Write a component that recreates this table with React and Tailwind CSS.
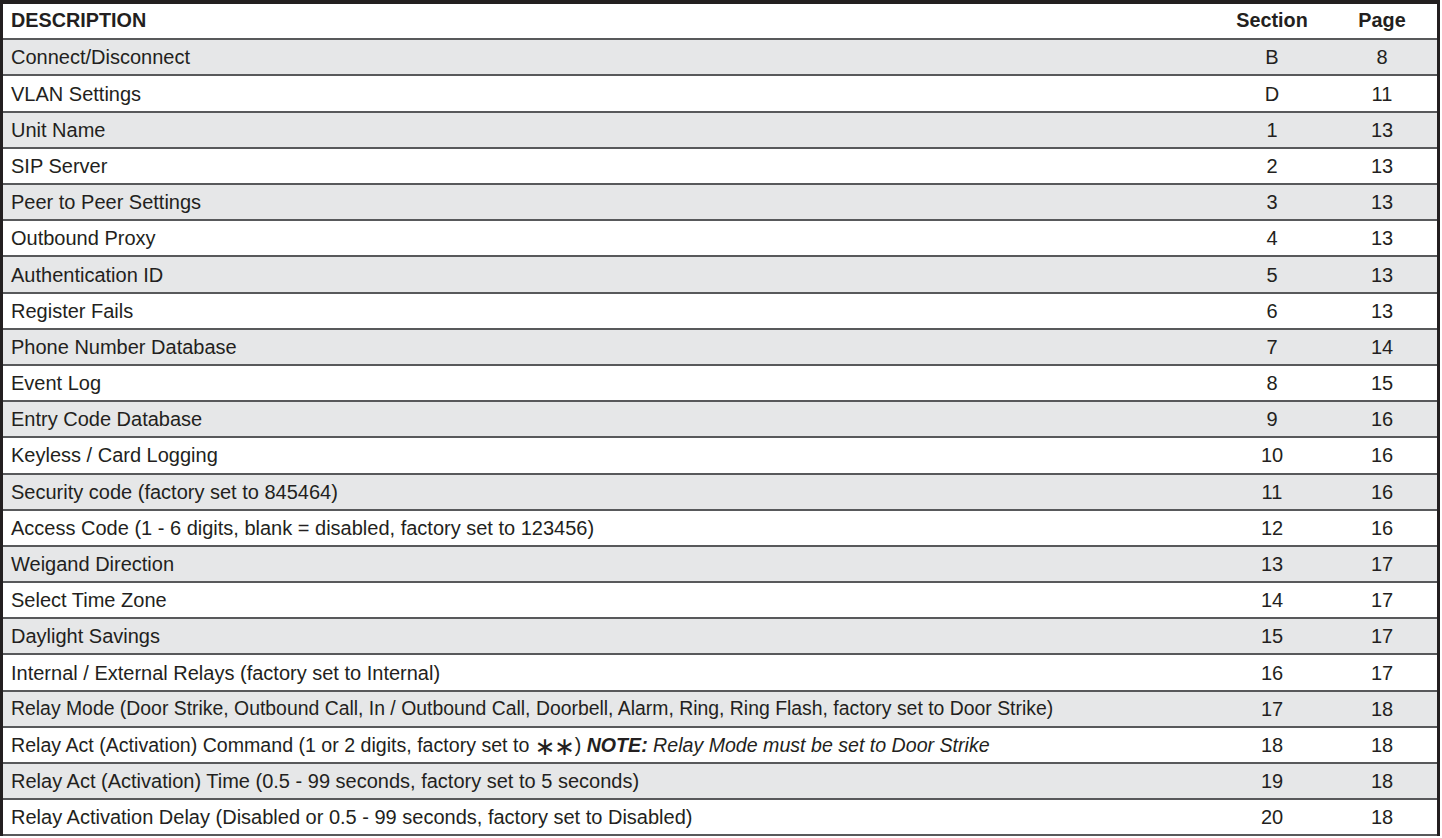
import React from "react";

const rows = [
  ["Connect/Disconnect", "B", "8"],
  ["VLAN Settings", "D", "11"],
  ["Unit Name", "1", "13"],
  ["SIP Server", "2", "13"],
  ["Peer to Peer Settings", "3", "13"],
  ["Outbound Proxy", "4", "13"],
  ["Authentication ID", "5", "13"],
  ["Register Fails", "6", "13"],
  ["Phone Number Database", "7", "14"],
  ["Event Log", "8", "15"],
  ["Entry Code Database", "9", "16"],
  ["Keyless / Card Logging", "10", "16"],
  ["Security code (factory set to 845464)", "11", "16"],
  ["Access Code (1 - 6 digits, blank = disabled, factory set to 123456)", "12", "16"],
  ["Weigand Direction", "13", "17"],
  ["Select Time Zone", "14", "17"],
  ["Daylight Savings", "15", "17"],
  ["Internal / External Relays (factory set to Internal)", "16", "17"],
  [
    "Relay Mode (Door Strike, Outbound Call, In / Outbound Call, Doorbell, Alarm, Ring, Ring Flash, factory set to Door Strike)",
    "17",
    "18",
  ],
  ["__note__", "18", "18"],
  ["Relay Act (Activation) Time (0.5 - 99 seconds, factory set to 5 seconds)", "19", "18"],
  ["Relay Activation Delay (Disabled or 0.5 - 99 seconds, factory set to Disabled)", "20", "18"],
];

const NoteDesc = () => (
  <span className="text-[19.6px]">
    Relay Act (Activation) Command (1 or 2 digits, factory set to{" "}
    <span className="font-['DejaVu_Sans',sans-serif] text-[25px] leading-none tracking-[-1.5px] align-[-3px]">∗∗</span>
    <span className="ml-[1px]">)</span>{" "}
    <span className="italic font-bold">NOTE:</span>{" "}
    <span className="italic">Relay Mode must be set to Door Strike</span>
  </span>
);

export default function App() {
  return (
    <div className="bg-white w-[1442px] h-[838px] overflow-hidden font-['Liberation_Sans',Arial,sans-serif] text-[#231f20]">
      <div className="w-[1440px] border-t-4 border-x-[3px] border-[#231f20]">
        {/* Header */}
        <div className="flex items-center h-[36.3px] border-b-2 border-[#58595b] bg-white text-[19.8px] font-bold">
          <div className="flex-1 pl-[8px]">DESCRIPTION</div>
          <div className="w-[146px] text-center">Section</div>
          <div className="w-[74px] text-center">Page</div>
          <div className="w-[18px]" />
        </div>

        {rows.map(([desc, sec, page], i) => (
          <div
            key={i}
            className={`flex items-center h-[36.2px] border-b-2 border-[#58595b] text-[20px] ${
              i % 2 === 0 ? "bg-[#e6e7e8]" : "bg-white"
            }`}
          >
            <div className={`flex-1 pl-[8px] whitespace-nowrap ${desc.startsWith("Relay Mode") ? "text-[19.4px]" : ""}`}>
              {desc === "__note__" ? <NoteDesc /> : desc}
            </div>
            <div className="w-[146px] text-center">{sec}</div>
            <div className="w-[74px] text-center">{page}</div>
            <div className="w-[18px]" />
          </div>
        ))}
      </div>
    </div>
  );
}
